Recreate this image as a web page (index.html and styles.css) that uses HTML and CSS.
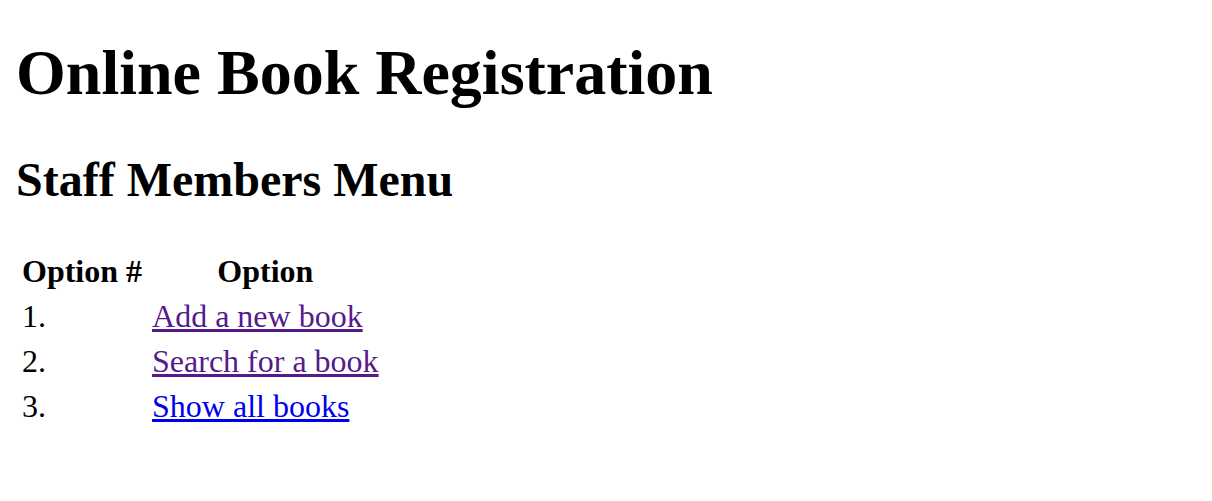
FILE: index.html
```html
<!DOCTYPE html>
<html>
<head>
<meta charset="utf-8">
<title>Online Book Registration</title>
<link rel="stylesheet" href="styles.css">
</head>
<body>
<h1 class="title">Online Book Registration</h1>
<h2 class="subtitle">Staff Members Menu</h2>
<table class="menu">
<tr><th>Option #</th><th>Option</th></tr>
<tr><td>1.</td><td><a class="visited" href="#add">Add a new book</a></td></tr>
<tr><td>2.</td><td><a class="visited" href="#search">Search for a book</a></td></tr>
<tr><td>3.</td><td><a class="link" href="#all">Show all books</a></td></tr>
</table>
</body>
</html>
```
FILE: styles.css
```css
html, body { background: #fff; }
body {
  margin: 0;
  padding: 0 16px;
  font-family: "Liberation Serif", "Times New Roman", serif;
  color: #000;
}
.title {
  font-size: 64px;
  font-weight: bold;
  margin: 36px 0 0;
  line-height: 74px;
}
.subtitle {
  font-size: 48px;
  font-weight: bold;
  margin: 42px 0 0;
  line-height: 55px;
}
.menu {
  margin: 41px 0 0 0;
  font-size: 32px;
  border-spacing: 2px;
}
.menu th, .menu td { padding: 3px 4px; }
.visited { color: #551a8b; }
.link { color: #0000ee; }
```
